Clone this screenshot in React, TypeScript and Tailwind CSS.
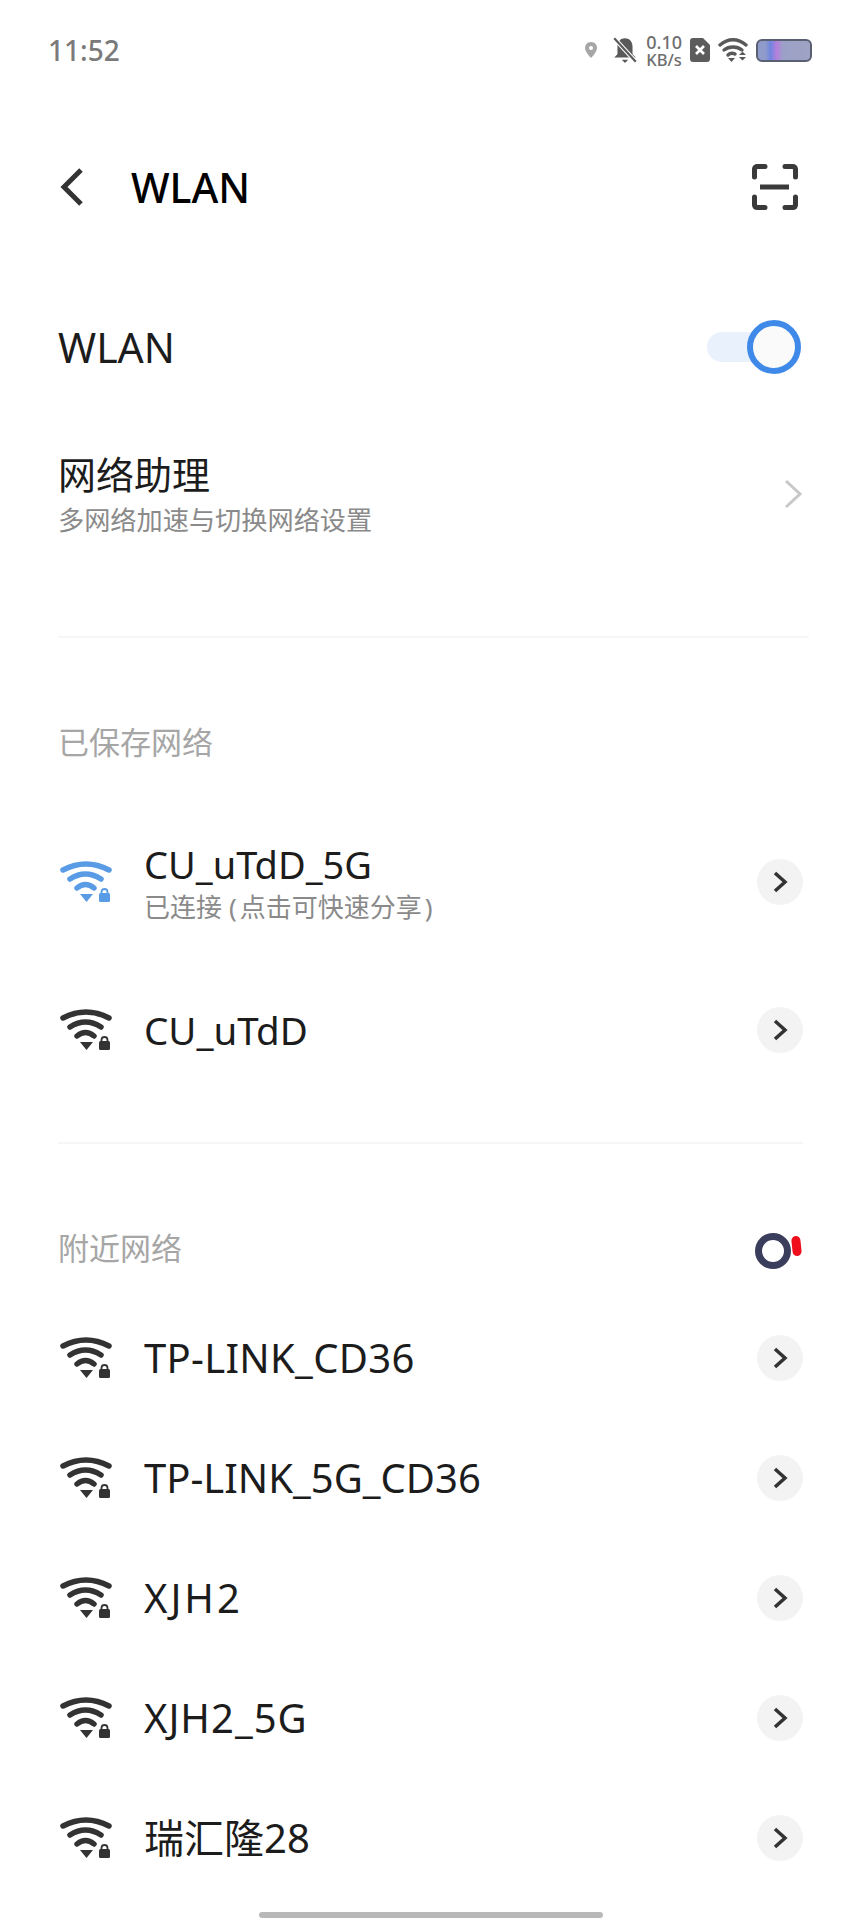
import React from "react";

const font = "font-['Noto_Sans','Noto_Sans_CJK_SC',sans-serif]";

const nearby = [
  { name: "TP-LINK_CD36", tracking: "tracking-[0.3px]" },
  { name: "TP-LINK_5G_CD36", tracking: "" },
  { name: "XJH2", tracking: "tracking-[3px]" },
  { name: "XJH2_5G", tracking: "tracking-[1px]" },
  { name: "瑞汇隆28", tracking: "" },
];

function WifiIcon({ color = "#333333" }: { color?: string }) {
  return (
    <svg width="54" height="48" viewBox="0 0 54 48" fill="none">
      <path d="M5 12 Q28 0 51 12" stroke={color} strokeWidth="5.5" strokeLinecap="round" />
      <path d="M12 21 Q27.5 11 43 21" stroke={color} strokeWidth="5.5" strokeLinecap="round" />
      <path d="M19 30 Q27.5 23 36 30" stroke={color} strokeWidth="5.5" strokeLinecap="round" />
      <path d="M22 36 H35 L28.5 44 Z" fill={color} />
      <rect x="41" y="35" width="11" height="9" rx="1.5" fill={color} />
      <path d="M43.5 36 V34 A3 3 0 0 1 49.5 34 V36" stroke={color} strokeWidth="1.8" />
    </svg>
  );
}

function ChevronBadge() {
  return (
    <div className="flex h-[46px] w-[46px] items-center justify-center rounded-full bg-[#f3f3f3]">
      <svg width="16" height="24" viewBox="0 0 16 24" fill="none">
        <path d="M3 3 L13 12 L3 21" stroke="#333333" strokeWidth="3.5" />
      </svg>
    </div>
  );
}

function NetworkRow({ name, size = "text-[40px]", tracking = "" }: { name: string; size?: string; tracking?: string }) {
  return (
    <div className="flex h-[120px] items-center justify-between pr-[58px]">
      <div className="flex items-center gap-[32px]">
        <WifiIcon />
        <span className={`${size} ${tracking} leading-none text-[#1c1c1c]`}>{name}</span>
      </div>
      <ChevronBadge />
    </div>
  );
}

export default function App() {
  return (
    <div className={`${font} h-[1920px] w-[861px] overflow-hidden bg-white`}>
      {/* status bar */}
      <div className="flex h-[100px] items-center justify-between pr-[49px] pl-[48px]">
        <span className="text-[28px] font-medium text-[#7a7a7a]">11:52</span>
        <div className="flex items-center gap-[8px]">
          <svg width="14" height="18" viewBox="0 0 14 18">
            <path d="M7 1 C3 1 1 4 1 7 C1 11 7 17 7 17 C7 17 13 11 13 7 C13 4 11 1 7 1 Z" fill="#a6a6a6" />
            <circle cx="7" cy="7" r="2" fill="#ffffff" />
          </svg>
          <svg width="26" height="28" viewBox="0 0 24 26" className="ml-[6px]">
            <path d="M12 2 C7 2 5 6 5 10 V17 L2 20 H22 L19 17 V10 C19 6 17 2 12 2 Z M9 22 H15 L12 25 Z" fill="#595959" />
            <path d="M1 1 L23 25" stroke="#ffffff" strokeWidth="4" />
            <path d="M2 2 L22 24" stroke="#595959" strokeWidth="2" />
          </svg>
          <div className="flex flex-col items-center text-[#6e6e6e]">
            <span className="text-[18px] leading-[18px] font-medium">0.10</span>
            <span className="text-[16.5px] leading-[17px] font-medium">KB/s</span>
          </div>
          <svg width="20" height="24" viewBox="0 0 20 24">
            <path d="M3 0 H13 L20 7 V21 A3 3 0 0 1 17 24 H3 A3 3 0 0 1 0 21 V3 A3 3 0 0 1 3 0 Z" fill="#5c5c5c" />
            <path d="M6 8 L14 16 M14 8 L6 16" stroke="#ffffff" strokeWidth="2.6" />
          </svg>
          <svg width="30" height="24" viewBox="0 0 30 24" fill="none">
            <path d="M2 7 C10 0 20 0 28 7" stroke="#595959" strokeWidth="3.4" strokeLinecap="round" />
            <path d="M6 12 C11 8 19 8 24 12" stroke="#595959" strokeWidth="3.4" strokeLinecap="round" />
            <path d="M10 17 C12 15 15 15 17 16" stroke="#595959" strokeWidth="3.4" strokeLinecap="round" />
            <path d="M10 20 H17 L13.5 24 Z" fill="#595959" />
            <path d="M21 17 H28 L24.5 13.5 Z M21 19 H28 L24.5 22.5 Z" fill="#595959" />
          </svg>
          <div className="h-[23px] w-[56px] rounded-[6px] border-2 border-[#5b5f72] bg-[linear-gradient(90deg,#8f9bcb_0%,#8f9bcb_14%,#6f86e0_24%,#b57fdc_36%,#9ba0c8_48%,#9fa4c4_100%)]" />
        </div>
      </div>

      {/* title bar */}
      <div className="mt-[41px] flex h-[92px] items-center justify-between pr-[63px] pl-[59px]">
        <div className="flex items-center gap-[46px]">
          <svg width="26" height="40" viewBox="0 0 26 40" fill="none">
            <path d="M22 3 L5 20 L22 37" stroke="#333333" strokeWidth="5" />
          </svg>
          <span className="text-[41px] leading-none font-medium text-black">WLAN</span>
        </div>
        <svg width="46" height="46" viewBox="0 0 46 46" fill="none">
          <path d="M2.5 13 V5 A3 3 0 0 1 5.5 2.5 H13 M33 2.5 H40.5 A3 3 0 0 1 43.5 5 V13 M2.5 33 V41 A3 3 0 0 0 5.5 43.5 H13 M33 43.5 H40.5 A3 3 0 0 0 43.5 41 V33" stroke="#3a3a3a" strokeWidth="5" strokeLinecap="round" />
          <path d="M8 23 H37" stroke="#3a3a3a" strokeWidth="5" />
        </svg>
      </div>

      {/* wlan toggle */}
      <div className="mt-[84px] flex h-[60px] items-center justify-between pr-[60px] pl-[58px]">
        <span className="text-[41px] leading-none text-[#1c1c1c]">WLAN</span>
        <div className="flex w-[94px] items-center justify-end">
          <div className="h-[30px] w-[54px] -mr-[14px] rounded-l-full bg-[#e8f1fc]" />
          <div className="z-10 h-[54px] w-[54px] rounded-full border-[6px] border-[#3f8ae8] bg-[#fafafa]" />
        </div>
      </div>

      {/* assistant */}
      <div className="mt-[72px] flex items-center justify-between pr-[58px] pl-[58px]">
        <div className="flex flex-col">
          <span className="text-[38px] leading-[50px] text-[#1c1c1c]">网络助理</span>
          <span className="mt-[3px] text-[26.2px] leading-[36px] text-[#8a8a8a]">多网络加速与切换网络设置</span>
        </div>
        <svg width="20" height="32" viewBox="0 0 20 32" fill="none">
          <path d="M3 3 L17 16 L3 29" stroke="#c8c8c8" strokeWidth="3" />
        </svg>
      </div>

      <div className="mt-[98px] mr-[52px] ml-[58px] h-[2px] bg-[#f6f6f6]" />

      {/* saved */}
      <div className="mt-[84px] pl-[58px] text-[31px] leading-[40px] text-[#a6a6a6]">已保存网络</div>

      <div className="mt-[70px] flex h-[100px] items-center justify-between pr-[58px] pl-[58px]">
        <div className="flex items-center gap-[32px]">
          <WifiIcon color="#5a9be6" />
          <div className="flex flex-col">
            <span className="text-[38px] leading-[48px] text-[#1c1c1c]">CU_uTdD_5G</span>
            <span className="mt-[2px] text-[26px] leading-[34px] text-[#8a8a8a]">
              已连接<span className="mr-[3px] ml-[7px]">(</span>点击可快速分享<span className="ml-[3px]">)</span>
            </span>
          </div>
        </div>
        <ChevronBadge />
      </div>

      <div className="mt-[38px] pl-[58px]">
        <NetworkRow name="CU_uTdD" size="text-[38.5px]" />
      </div>

      <div className="mt-[52px] mr-[58px] ml-[58px] h-[2px] bg-[#f6f6f6]" />

      {/* nearby */}
      <div className="mt-[84px] flex h-[40px] items-center justify-between pr-[60px] pl-[58px]">
        <span className="text-[31px] leading-[40px] text-[#a6a6a6]">附近网络</span>
        <div className="mt-[6px] flex items-start gap-[1px]">
          <div className="h-[36px] w-[36px] rounded-full border-[7px] border-[#3a3d5c]" />
          <div className="mt-[3px] h-[20px] w-[9px] rotate-[-6deg] rounded-full bg-[#f00d1c]" />
        </div>
      </div>

      <div className="mt-[30px] pl-[58px]">
        {nearby.map((item) => (
          <NetworkRow key={item.name} name={item.name} tracking={item.tracking} />
        ))}
      </div>

      {/* home indicator */}
      <div className="flex justify-center pt-[14px]">
        <div className="h-[6px] w-[344px] rounded-full bg-[#b8b8b8]" />
      </div>
    </div>
  );
}
